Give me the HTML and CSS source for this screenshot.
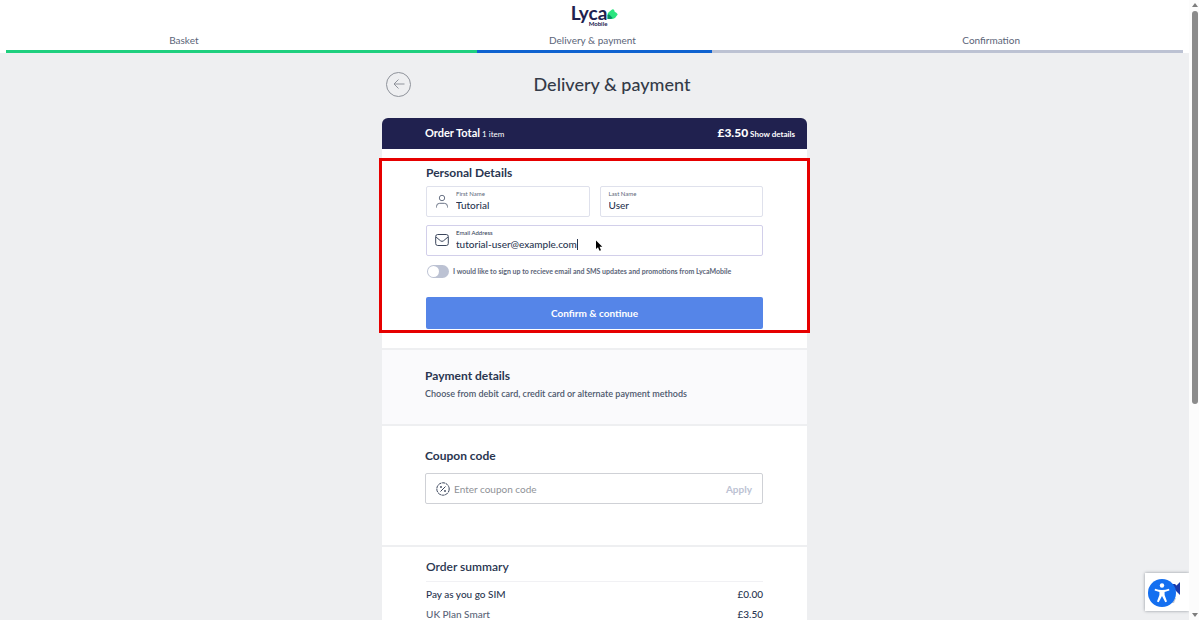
FILE: index.html
```html
<!DOCTYPE html>
<html lang="en">

<head>
    <meta charset="UTF-8">
    <meta name="viewport" content="width=device-width, initial-scale=1.0">
    <title>Delivery &amp; payment - Lyca Mobile</title>
    <link rel="stylesheet" href="styles.css">
</head>

<body>
    <div class="page">
        <header class="top">
            <a class="logo" href="#" aria-label="Lyca Mobile">
                <span class="logo-name">Lyca</span>
                <svg class="logo-mark" viewBox="0 0 20 20">
                    <path d="M1 18 V10 Q1 8 3 6 L8 2 Q11 -1 13 2 L14 5 L17 7 Q21 10 18 12 L15 16 Q13 18 10 18 Z" fill="#2be57f"/>
                    <path d="M1 18 V12 Q2 8 5 11 L9 15 Q10 18 7 18 Z" fill="#0b8f66"/>
                </svg>
                <span class="logo-sub">Mobile</span>
            </a>
            <nav class="steps">
                <a href="#">Basket</a>
                <a href="#">Delivery &amp; payment</a>
                <a href="#">Confirmation</a>
            </nav>
            <div class="progress">
                <span class="done"></span>
                <span class="current"></span>
                <span class="left"></span>
            </div>
        </header>

        <main>
            <div class="title-row">
                <button class="back" type="button" aria-label="Back">
                    <svg viewBox="0 0 12 12"><path d="M11.500 6 H1 M5.500 1.500 L1 6 L5.500 10.500"/></svg>
                </button>
                <h1>Delivery &amp; payment</h1>
            </div>

            <div class="order-total">
                <p><strong>Order Total</strong> <span>1 item</span></p>
                <p class="total"><strong>£3.50</strong> <a href="#">Show details</a></p>
            </div>

            <form class="section personal">
                <div class="highlight"></div>
                <h2>Personal Details</h2>
                <div class="names">
                    <div class="field">
                        <svg class="icon thin" viewBox="0 0 14 14">
                            <circle cx="7" cy="4" r="2.700"/>
                            <path d="M1.500 13.500 V12.500 Q1.500 9.300 4.700 9.300 H9.300 Q12.500 9.300 12.500 12.500 V13.500"/>
                        </svg>
                        <div class="field-text">
                            <label for="first">First Name</label>
                            <input id="first" type="text" value="Tutorial">
                        </div>
                    </div>
                    <div class="field plain">
                        <div class="field-text">
                            <label for="last">Last Name</label>
                            <input id="last" type="text" value="User">
                        </div>
                    </div>
                </div>
                <div class="field active">
                    <svg class="icon" viewBox="0 0 14 14">
                        <rect x="0.700" y="1.500" width="12.600" height="11" rx="2"/>
                        <path d="M1 4 L5.500 7.800 Q7 9 8.500 7.800 L13 4"/>
                    </svg>
                    <div class="field-text">
                        <label for="email">Email Address</label>
                        <input id="email" type="email" value="tutorial-user@example.com">
                    </div>
                    <span class="caret"></span>
                    <svg class="pointer" viewBox="0 0 8 12">
                        <path d="M1 0.500 V9 L3 7.200 L4.500 10.800 L6 10.200 L4.500 6.800 H7.300 Z"/>
                    </svg>
                </div>
                <div class="signup">
                    <input id="signup" type="checkbox">
                    <label for="signup">I would like to sign up to recieve email and SMS updates and promotions from LycaMobile</label>
                </div>
                <button class="confirm" type="submit">Confirm &amp; continue</button>
            </form>

            <section class="section payment">
                <h2>Payment details</h2>
                <p>Choose from debit card, credit card or alternate payment methods</p>
            </section>

            <section class="section coupon">
                <h2><label for="coupon">Coupon code</label></h2>
                <div class="coupon-box">
                    <svg class="icon" viewBox="0 0 14 14">
                        <circle cx="7" cy="7" r="6.200" stroke-dasharray="3.300 0.600"/>
                        <path d="M4.500 9.500 L9.500 4.500"/>
                        <circle cx="5" cy="5" r="0.600"/>
                        <circle cx="9" cy="9" r="0.600"/>
                    </svg>
                    <input id="coupon" type="text" placeholder="Enter coupon code">
                    <button type="button">Apply</button>
                </div>
            </section>

            <section class="section summary">
                <h2>Order summary</h2>
                <table>
                    <tr>
                        <td>Pay as you go SIM</td>
                        <td class="price">£0.00</td>
                    </tr>
                    <tr class="plan">
                        <td>UK Plan Smart</td>
                        <td class="price">£3.50</td>
                    </tr>
                </table>
            </section>
        </main>

        <div class="widget">
            <svg class="captcha" viewBox="0 0 12 26">
                <path d="M0 3 H7 L12 8 V14 L8 10 Q5 6 0 5 Z" fill="#1c3aa9"/>
                <path d="M12 1 V13 L6 7 Z" fill="#1c3aa9"/>
                <path d="M2 17 H8 L6 22 H2 Z" fill="#c9cbd3"/>
            </svg>
            <button type="button" aria-label="Accessibility">
                <svg viewBox="0 0 28 28">
                    <circle cx="14" cy="6.500" r="2.200"/>
                    <path d="M7 9.800 Q14 12.300 21 9.800 L21.400 11.500 L16.600 13 V16 L19 22.500 L17.300 23.200 L14 17 L10.700 23.200 L9 22.500 L11.400 16 V13 L6.600 11.500 Z"/>
                </svg>
            </button>
        </div>
    </div>

    <div class="scrollbar">
        <span class="arrow up"></span>
        <span class="thumb"></span>
        <span class="arrow down"></span>
    </div>
</body>

</html>
```
FILE: styles.css
```css
* {
    box-sizing: border-box;
}

body {
    margin: 0;
    height: 100vh;
    display: flex;
    overflow: hidden;
    font-family: Lato, "Open Sans", sans-serif;
    font-size: 10px;
    line-height: 14px;
    color: #2a3650;
    background-color: #ffffff;
}

h1, h2, p {
    margin: 0;
}

a {
    color: inherit;
    text-decoration: none;
}

button, input {
    font-family: inherit;
    font-size: 10px;
    color: inherit;
    border: none;
    padding: 0;
    background: none;
}

button {
    cursor: pointer;
}

svg {
    display: block;
}

.page {
    flex: 1;
    position: relative;
    overflow: hidden;
    background-color: #eeeff1;
}

/* header */
.top {
    background-color: #ffffff;
    padding: 4px 6px 0;
}

.logo {
    display: grid;
    grid-template-columns: auto 11px;
    justify-content: center;
    color: #20214f;
}

.logo-name {
    font-size: 19px;
    font-weight: bold;
    line-height: 17px;
}

.logo-mark {
    width: 11px;
    height: 11px;
    margin-top: 5px;
}

.logo-sub {
    font-size: 6px;
    font-weight: bold;
    line-height: 6px;
    text-align: right;
}

.steps {
    display: grid;
    grid-template-columns: 356fr 462fr 360fr;
    padding-top: 5px;
    text-align: center;
    color: #5b6578;
    line-height: 16px;
}

.steps a:last-child {
    padding-right: 24px;
}

.progress {
    display: flex;
    height: 3px;
    margin-top: 2px;
}

.done {
    flex: 2;
    background-color: #1fcf7f;
}

.current {
    flex: 1;
    background-color: #0f62d0;
}

.left {
    flex: 2;
    background-color: #bcc2d3;
}

main {
    width: 35%;
    min-width: 425px;
    margin: 0 auto;
}

.title-row {
    display: flex;
    align-items: center;
    gap: 12px;
    padding: 18px 6px 21px 4px;
}

.back {
    width: 25px;
    height: 25px;
    border: 1px solid #8f939b;
    border-radius: 50%;
    display: flex;
    align-items: center;
    justify-content: center;
}

.back svg {
    width: 12px;
    height: 12px;
    fill: none;
    stroke: #8f939b;
}

h1 {
    flex: 1;
    text-align: center;
    font-size: 18px;
    font-weight: 500;
    line-height: 26px;
    color: #343b48;
}

/* order card */
.order-total {
    display: flex;
    justify-content: space-between;
    align-items: center;
    height: 31px;
    padding: 0 12px 1px 43px;
    background-color: #20214f;
    border-radius: 6px 6px 0 0;
    color: #ffffff;
    font-size: 8px;
}

.order-total strong {
    font-size: 11px;
}

.total {
    font-weight: bold;
}

.total strong {
    font-size: 12px;
    font-weight: 900;
}

.section {
    position: relative;
    padding: 0 44px;
    margin-bottom: 2px;
    background-color: #ffffff;
}

h2 {
    font-size: 12px;
    font-weight: bold;
    line-height: 16px;
}

.personal {
    padding-top: 16px;
    padding-bottom: 19px;
}

.highlight {
    position: absolute;
    top: 9px;
    right: -3px;
    bottom: 15px;
    left: -3px;
    border: 3px solid #e60000;
    pointer-events: none;
}

.names {
    display: grid;
    grid-template-columns: 1fr 1fr;
    gap: 10px;
    margin: 5px 0 8px;
}

.field {
    position: relative;
    display: flex;
    align-items: center;
    gap: 7px;
    height: 31px;
    padding: 0 8px 2px;
    border: 1px solid #dfe1ec;
    border-radius: 2px;
}

.icon {
    flex: none;
    width: 14px;
    height: 14px;
    fill: none;
    stroke: #3b465c;
}

.thin {
    stroke: #6b7486;
}

.field-text {
    flex: 1;
    display: flex;
    flex-direction: column;
}

.field label {
    font-size: 6px;
    line-height: 8px;
    color: #5b6578;
}

.field input {
    width: 100%;
    height: 14px;
    font-weight: 500;
    outline: none;
}

.active {
    border-color: #d2cfea;
}

.active label {
    color: #2a3650;
}

.caret {
    position: absolute;
    top: 13px;
    left: 150px;
    width: 1px;
    height: 11px;
    background-color: #2a3650;
}

.pointer {
    position: absolute;
    top: 14px;
    left: 168px;
    width: 8px;
    height: 12px;
}

.signup {
    display: flex;
    align-items: center;
    gap: 4px;
    margin: 8px 0 19px 1px;
    font-size: 7px;
    font-weight: bold;
    color: #5b6578;
}

.signup input {
    appearance: none;
    display: flex;
    width: 22px;
    height: 13px;
    margin: 0;
    padding: 1px;
    border-radius: 7px;
    background-color: #bcc2d3;
}

.signup input::before {
    content: "";
    width: 11px;
    height: 11px;
    border-radius: 50%;
    background-color: #ffffff;
}

.signup input:checked {
    justify-content: flex-end;
}

.confirm {
    width: 100%;
    height: 32px;
    padding-bottom: 1px;
    border-radius: 2px;
    background-color: #5585e8;
    color: #ffffff;
    font-weight: bold;
}

.payment {
    padding-top: 18px;
    padding-bottom: 23px;
    padding-left: 43px;
    background-color: #fafafc;
}

.payment p {
    padding-top: 3px;
    font-size: 9px;
    font-weight: 600;
    color: #4d586d;
}

.coupon {
    padding-top: 22px;
    padding-bottom: 41px;
    padding-left: 43px;
}

.coupon-box {
    display: flex;
    align-items: center;
    gap: 4px;
    height: 31px;
    margin-top: 9px;
    padding: 0 10px;
    border: 1px solid #cfd1d6;
    border-radius: 2px;
}

.coupon-box input {
    flex: 1;
    outline: none;
}

.coupon-box input::placeholder {
    color: #8f9297;
}

.coupon-box button {
    font-weight: bold;
    color: #bcc2d3;
}

.summary {
    padding-top: 12px;
    padding-bottom: 20px;
}

.summary h2 {
    font-weight: 600;
    padding-bottom: 6px;
    border-bottom: 1px solid #f1f1f4;
}

table {
    width: 100%;
    margin-top: 2px;
    border-collapse: collapse;
}

td {
    height: 20px;
    padding: 0;
    font-weight: 500;
}

.plan td:first-child {
    color: #5b6578;
}

.price {
    text-align: right;
}

/* accessibility button in the corner */
.widget {
    position: absolute;
    right: 0;
    bottom: 9px;
    width: 44px;
    height: 38px;
    padding: 6px 3px;
    background-color: #ffffff;
    box-shadow: 0 0 3px #8f939b;
}

.widget button {
    position: relative;
    width: 28px;
    height: 28px;
    border-radius: 50%;
    background-color: #146ff0;
    fill: #ffffff;
}

.captcha {
    position: absolute;
    top: 8px;
    right: 9px;
    width: 12px;
    height: 26px;
}

/* scrollbar */
.scrollbar {
    width: 10px;
    padding: 3px 1px 3px 2px;
    display: flex;
    flex-direction: column;
    align-items: center;
    background-color: #fcfcfc;
}

.thumb {
    width: 6px;
    height: 64%;
    margin: 4px 0 auto;
    border-radius: 3px;
    background-color: #8b8b8b;
}

.arrow {
    border: 3px solid transparent;
}

.up {
    border-top: none;
    border-bottom: 4px solid #7d7d7d;
}

.down {
    border-bottom: none;
    border-top: 4px solid #7d7d7d;
}
```
